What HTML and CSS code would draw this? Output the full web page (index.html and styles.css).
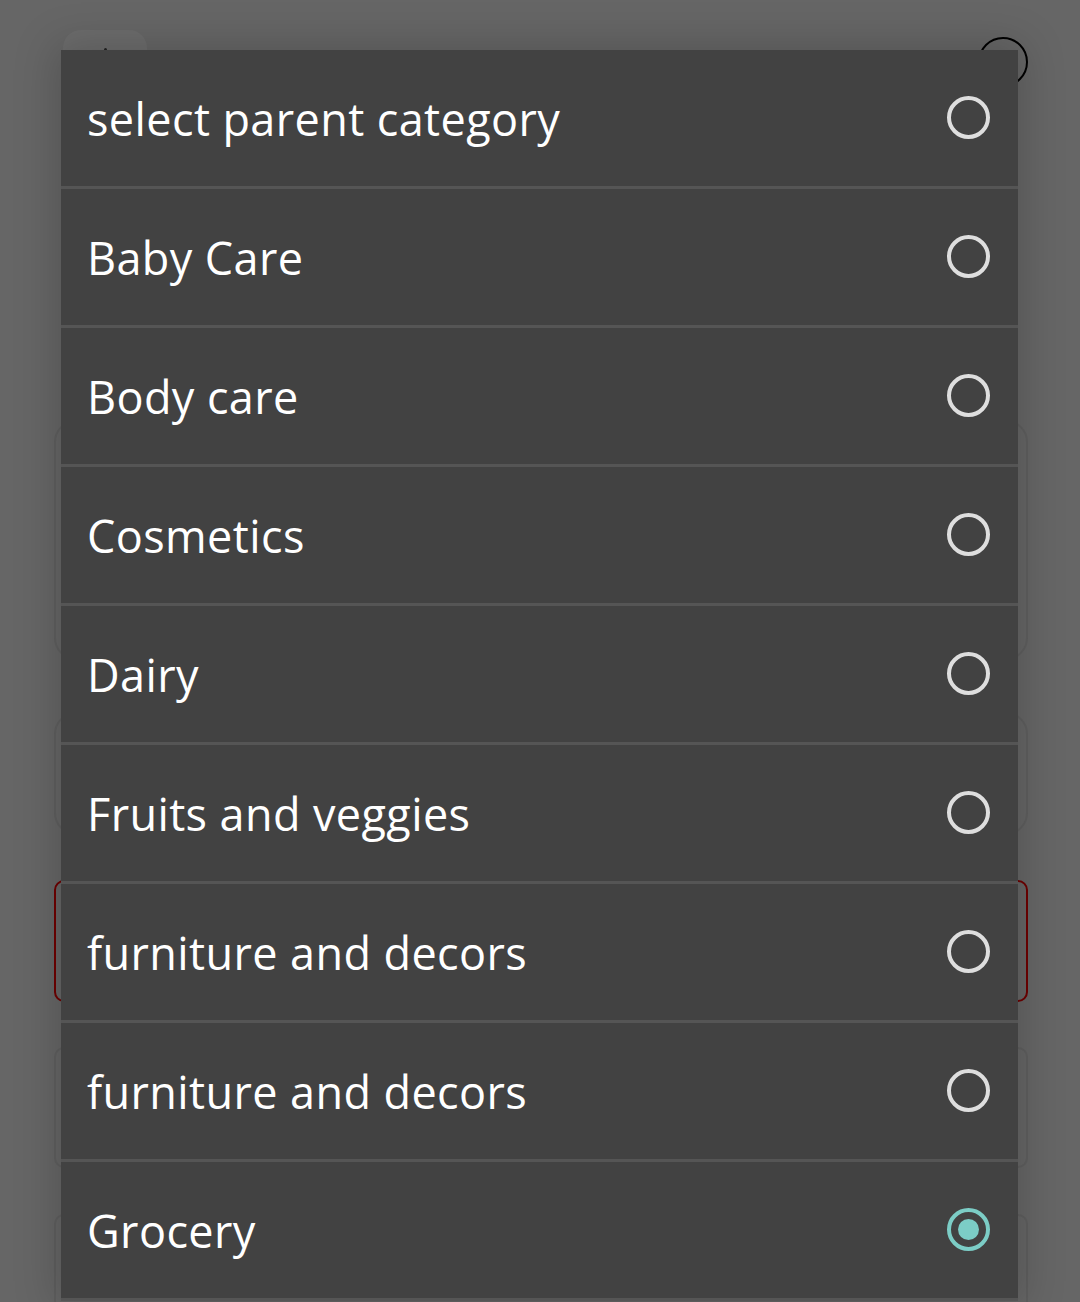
FILE: index.html
```html
<!DOCTYPE html>
<html>
<head>
<meta charset="utf-8">
<link rel="stylesheet" href="styles.css">
</head>
<body>
<div class="page">
  <div class="topbar">
    <div class="back-btn"><span class="dot"></span></div>
    <div class="help-btn"></div>
  </div>
  <div class="cards">
    <div class="card c1"></div>
    <div class="card c2"></div>
    <div class="card c3 error"></div>
    <div class="card c4"></div>
    <div class="card c5"></div>
  </div>
</div>
<div class="overlay">
  <div class="dialog">
    <div class="row"><span class="label">select parent category</span><span class="radio"></span></div>
    <div class="row"><span class="label">Baby Care</span><span class="radio"></span></div>
    <div class="row"><span class="label">Body care</span><span class="radio"></span></div>
    <div class="row"><span class="label">Cosmetics</span><span class="radio"></span></div>
    <div class="row"><span class="label">Dairy</span><span class="radio"></span></div>
    <div class="row"><span class="label">Fruits and veggies</span><span class="radio"></span></div>
    <div class="row"><span class="label">furniture and decors</span><span class="radio"></span></div>
    <div class="row"><span class="label">furniture and decors</span><span class="radio"></span></div>
    <div class="row"><span class="label">Grocery</span><span class="radio checked"></span></div>
  </div>
</div>
</body>
</html>
```
FILE: styles.css
```css
html, body {
  margin: 0;
  padding: 0;
  width: 1080px;
  height: 1302px;
  overflow: hidden;
  background: #666666;
  font-family: "Open Sans", Lato, sans-serif;
}
.page {
  position: relative;
  width: 1080px;
  height: 1302px;
}
.topbar {
  display: flex;
  justify-content: space-between;
  padding: 30px 52px 0 63px;
  height: 60px;
}
.back-btn {
  width: 84px;
  height: 60px;
  border-radius: 18px;
  background: #6c6c6c;
  display: flex;
  justify-content: center;
}
.back-btn .dot {
  width: 3px;
  height: 3px;
  border-radius: 50%;
  background: #222;
  margin-top: 18px;
}
.help-btn {
  width: 46px;
  height: 46px;
  margin-top: 7px;
  border: 2px solid #000;
  border-radius: 50%;
}
.cards {
  display: flex;
  flex-direction: column;
  padding: 330px 52px 0 54px;
}
.card {
  border: 2px solid #5f5f5f;
  border-radius: 22px;
  box-sizing: border-box;
}
.c1 { height: 240px; }
.c2 { height: 123px; margin-top: 52px; }
.c3 { height: 122px; margin-top: 45px; border-color: #6e0000; border-radius: 10px; }
.c4 { height: 121px; margin-top: 45px; border-radius: 10px; }
.c5 { height: 140px; margin-top: 46px; border-radius: 10px; }
.overlay {
  position: absolute;
  left: 0;
  top: 0;
  width: 1080px;
  height: 1302px;
}
.dialog {
  position: absolute;
  left: 61px;
  top: 50px;
  width: 957px;
  background: #424242;
  box-shadow: 0 0 40px 6px rgba(0,0,0,0.18);
}
.row {
  display: flex;
  align-items: center;
  justify-content: space-between;
  height: 136px;
  padding: 0 28px 0 26px;
  border-bottom: 3px solid #555555;
}
.label {
  color: #ffffff;
  font-size: 45px;
  line-height: 1;
  letter-spacing: 0.4px;
}
.radio {
  width: 43px;
  height: 43px;
  border: 4px solid #dedede;
  border-radius: 50%;
  box-sizing: border-box;
  position: relative;
  margin-top: -2px;
}
.radio.checked {
  border-color: #7ccdc6;
}
.radio.checked::after {
  content: "";
  position: absolute;
  left: 7px;
  top: 7px;
  width: 21px;
  height: 21px;
  border-radius: 50%;
  background: #7ccdc6;
}
```
